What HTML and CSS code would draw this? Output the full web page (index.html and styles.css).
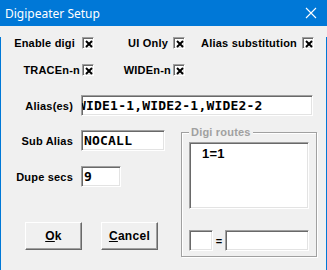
FILE: index.html
```html
<!DOCTYPE html>
<html>
<head><meta charset="utf-8"/>
<title>Digipeater Setup</title>
<link rel="stylesheet" href="styles.css">
</head>
<body>
<div class="window">
  <div class="titlebar">
    <span class="title">Digipeater Setup</span>
    <svg class="close" width="12" height="12" viewBox="0 0 12 12"><path d="M1 1 L11 11 M11 1 L1 11" stroke="#fff" stroke-width="1.1" fill="none"/></svg>
  </div>
  <div class="client">
    <div class="checks">
      <label class="check check-wide">Enable digi <span class="box"><svg width="8" height="8" viewBox="0 0 8 8"><path d="M1 1 L7 7 M7 1 L1 7" stroke="#000" stroke-width="2" fill="none"/></svg></span></label>
      <label class="check">UI Only <span class="box"><svg width="8" height="8" viewBox="0 0 8 8"><path d="M1 1 L7 7 M7 1 L1 7" stroke="#000" stroke-width="2" fill="none"/></svg></span></label>
      <label class="check">Alias substitution <span class="box"><svg width="8" height="8" viewBox="0 0 8 8"><path d="M1 1 L7 7 M7 1 L1 7" stroke="#000" stroke-width="2" fill="none"/></svg></span></label>
    </div>
    <div class="checks checks-second">
      <label class="check check-tight">TRACEn-n <span class="box"><svg width="8" height="8" viewBox="0 0 8 8"><path d="M1 1 L7 7 M7 1 L1 7" stroke="#000" stroke-width="2" fill="none"/></svg></span></label>
      <label class="check check-tight">WIDEn-n <span class="box"><svg width="8" height="8" viewBox="0 0 8 8"><path d="M1 1 L7 7 M7 1 L1 7" stroke="#000" stroke-width="2" fill="none"/></svg></span></label>
    </div>
    <div class="field field-alias">
      <span class="field-label">Alias(es)</span>
      <div class="edit edit-alias"><span class="edit-text scrolled">WIDE1-1,WIDE2-1,WIDE2-2</span></div>
    </div>
    <div class="lower">
      <div class="left-col">
        <div class="field">
          <span class="field-label">Sub Alias</span>
          <div class="edit edit-sub"><span class="edit-text">NOCALL</span></div>
        </div>
        <div class="field field-dupe">
          <span class="field-label">Dupe secs</span>
          <div class="edit edit-dupe"><span class="edit-text">9</span></div>
        </div>
        <div class="buttons">
          <button class="btn"><u>O</u>k</button>
          <button class="btn"><u>C</u>ancel</button>
        </div>
      </div>
      <div class="group">
        <span class="legend">Digi routes</span>
        <div class="listbox"><div class="list-item">1=1</div></div>
        <div class="route-edit">
          <div class="edit edit-key"></div>
          <span class="eq">=</span>
          <div class="edit edit-value"></div>
        </div>
      </div>
    </div>
  </div>
</div>
</body>
</html>
```
FILE: styles.css
```css
body { margin: 0; background: #f0f0f0; }

.window {
    width: 327px;
    height: 270px;
    font-family: "Liberation Sans", Arial, sans-serif;
    font-weight: bold;
    font-size: 11px;
    letter-spacing: 0.2px;
    color: #000;
}

.titlebar {
    height: 26px;
    background: #0078d7;
    display: flex;
    align-items: center;
    justify-content: space-between;
    padding: 0 10px 0 5px;
}
.title {
    font-family: "Noto Sans", "Open Sans", sans-serif;
    font-weight: normal;
    font-size: 12px;
    letter-spacing: 0;
    color: #fff;
}

.client {
    height: 244px;
    box-sizing: border-box;
    border: 1px solid #0078d7;
    border-top: none;
    background: #f0f0f0;
}

/* checkbox rows */
.checks {
    display: grid;
    grid-template-columns: 93px 91px 129px;
    margin-top: 11px;
    height: 12px;
}
.checks-second { margin-top: 15px; }

.check {
    display: flex;
    justify-content: flex-end;
    align-items: center;
    gap: 5px;
    height: 12px;
    line-height: 12px;
    white-space: nowrap;
}
.check-wide { gap: 7px; }
.check-tight { gap: 2px; }

.box {
    width: 12px;
    height: 12px;
    box-sizing: border-box;
    background: #fff;
    border-top: 1px solid #a0a0a0;
    border-left: 1px solid #a0a0a0;
    border-bottom: 1px solid #fff;
    border-right: 1px solid #fff;
    box-shadow: inset 1px 1px #696969, inset -1px -1px #e3e3e3;
    display: flex;
    align-items: center;
    justify-content: center;
}
.box svg { display: block; margin: 1px 0 0 1px; }

/* labelled edit fields */
.field {
    display: flex;
    align-items: center;
    height: 21px;
}
.field-alias { margin-top: 19px; }
.field-dupe { margin-top: 15px; }

.field-label {
    width: 80px;
    box-sizing: border-box;
    padding-right: 8px;
    text-align: right;
    white-space: nowrap;
}

.edit {
    height: 21px;
    box-sizing: border-box;
    background: #fff;
    border-top: 1px solid #a0a0a0;
    border-left: 1px solid #a0a0a0;
    border-bottom: 1px solid #fff;
    border-right: 1px solid #fff;
    box-shadow: inset 1px 1px #696969, inset -1px -1px #e3e3e3;
    overflow: hidden;
    white-space: nowrap;
}
.edit-text {
    display: block;
    padding-left: 2px;
    font-family: "DejaVu Sans Mono", "Liberation Mono", monospace;
    font-weight: bold;
    font-size: 13px;
    line-height: 19px;
    letter-spacing: 0.2px;
}
.scrolled { margin-left: -6px; }

.edit-alias { width: 232px; }
.edit-sub { width: 84px; }
.edit-dupe { width: 40px; }

/* lower half */
.lower {
    display: flex;
    margin-top: 14px;
}
.left-col { width: 180px; }

.buttons {
    display: flex;
    gap: 19px;
    padding-left: 24px;
    margin-top: 35px;
}
.btn {
    width: 57px;
    height: 28px;
    padding: 0;
    background: #f0f0f0;
    border-top: 1px solid #fff;
    border-left: 1px solid #fff;
    border-right: 1px solid #696969;
    border-bottom: 1px solid #696969;
    box-shadow: inset -1px -1px #a0a0a0;
    font-family: "Liberation Sans", Arial, sans-serif;
    font-weight: bold;
    font-size: 12px;
    letter-spacing: 0.3px;
    color: #000;
}

.group {
    position: relative;
    margin-top: 2px;
    width: 136px;
    height: 125px;
    box-sizing: border-box;
    border: 1px solid #a0a0a0;
    box-shadow: inset 1px 1px #fff, 1px 1px #fff;
    padding: 9px 0 0 7px;
}
.legend {
    position: absolute;
    top: -8px;
    left: 7px;
    padding: 0 2px;
    background: #f0f0f0;
    color: #a0a0a0;
    line-height: 14px;
}

.listbox {
    width: 120px;
    height: 67px;
    box-sizing: border-box;
    background: #fff;
    border-top: 1px solid #a0a0a0;
    border-left: 1px solid #a0a0a0;
    border-bottom: 1px solid #fff;
    border-right: 1px solid #fff;
    box-shadow: inset 1px 1px #696969, inset -1px -1px #e3e3e3;
    padding: 3px 0 0 12px;
}
.list-item {
    font-size: 13px;
    line-height: 15px;
}

.route-edit {
    display: flex;
    align-items: center;
    margin-top: 21px;
}
.edit-key { width: 24px; }
.edit-value { width: 84px; }
.eq {
    width: 12px;
    text-align: center;
}
```
